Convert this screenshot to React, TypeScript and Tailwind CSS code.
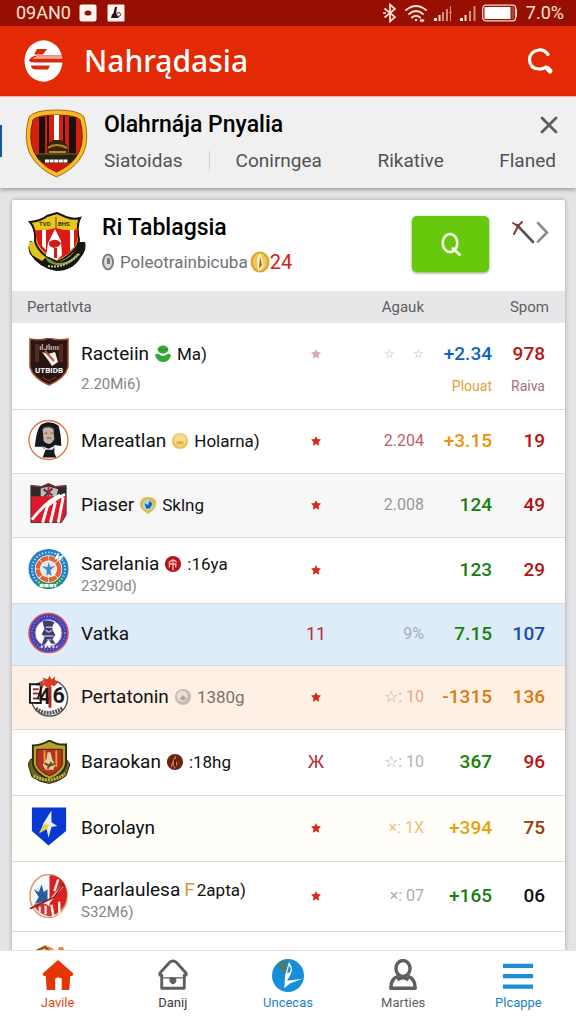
import type { ReactNode } from "react";

function StatusBar() {
  return (
    <div className="flex h-[26px] shrink-0 items-center bg-[#960f00] pl-4 pr-3 text-[#ffe3da]">
      <span className="text-lg leading-6">09AN0</span>
      <svg className="ml-2 size-[18px]" viewBox="0 0 18 18" aria-hidden="true">
        <rect width="17" height="17" x=".5" y=".5" rx="2" fill="#fff4f0" />
        <ellipse cx="9" cy="9" rx="3.4" ry="2.6" fill="#8a1208" />
      </svg>
      <svg className="ml-[10px] size-[18px]" viewBox="0 0 18 18" aria-hidden="true">
        <rect width="17" height="17" x=".5" y=".5" rx="1" fill="#fff4f0" />
        <path d="M8 3 L10 3 L9 10 L12 14 H4 Q4 11 6.500 9Z" fill="#2a0d1c" />
        <circle cx="11.500" cy="10.500" r="2" fill="none" stroke="#5a2030" />
      </svg>
      <div className="ml-auto flex items-center">
        <svg className="h-5 w-[14px]" viewBox="0 0 14 20" fill="none" stroke="currentColor" strokeWidth="1.700" aria-hidden="true">
          <path d="M1.500 5.500 L12 14 L7 18.500 V1.500 L12 6 L1.500 14.500 M0 10H3" />
        </svg>
        <svg className="ml-2 h-5 w-[22px]" viewBox="0 0 22 20" fill="none" stroke="currentColor" strokeWidth="1.900" strokeLinecap="round" aria-hidden="true">
          <path d="M1 7 Q11 -1 21 7 M4 11 Q11 5 18 11 M7 14.500 Q11 11 15 14.500" />
          <circle cx="11" cy="17" r="1.200" fill="currentColor" stroke="none" />
          <path d="M16 17.500h2" strokeWidth="2.500" />
        </svg>
        <svg className="ml-[7px] h-5 w-[18px]" viewBox="0 0 18 20" fill="currentColor" aria-hidden="true">
          <path d="M0 15h3v3H0zM4.500 12h2v6h-2z" />
          <path opacity=".6" d="M8 9h2v9H8zM12 6h2v12h-2zM16 3h1v15h-1zM15 9h3v1h-3z" />
        </svg>
        <svg className="ml-2 h-5 w-4" viewBox="0 0 16 20" fill="currentColor" aria-hidden="true">
          <path d="M0 15h3v3H0zM4.500 12h2v6h-2z" />
          <path opacity=".6" d="M9 8h2v10H9zM13.500 3h2v15h-2z" />
        </svg>
        <svg className="ml-[6px] h-[18px] w-9" viewBox="0 0 36 18" aria-hidden="true">
          <rect x=".7" y="1.200" width="33" height="15.600" rx="3" fill="none" stroke="#ffd8ce" strokeWidth="1.200" />
          <rect x="2.500" y="3" width="26" height="12" fill="#fff" />
          <rect x="29.500" y="3" width="3" height="12" fill="#a8483b" />
          <path d="M34.500 5v8" stroke="#ffd8ce" />
        </svg>
        <span className="ml-2 text-lg leading-6">7.0%</span>
      </div>
    </div>
  );
}

function AppHeader() {
  return (
    <header className="flex h-[70px] shrink-0 items-center bg-[#e32a05] pl-6 pr-[22px] text-white">
      <svg className="h-[42px] w-[39px]" viewBox="0 0 39 42" aria-hidden="true">
        <ellipse cx="19.500" cy="21" rx="19" ry="20.700" fill="#fff" />
        <path d="M13 9 H23 L19 14.500 H10Z" fill="#d62a0c" />
        <path d="M5 20 Q8 15.500 13 15.500 H39 V17 H14 Q10 17 8.500 18.500 H39 V22.500 H10 Q5 22.500 5 20Z" fill="#d62a0c" />
        <path d="M13 16H38V18H10Z" fill="#f4a08a" />
        <path d="M7 25.500 H26 L24 29.500 H11 Q7 29 7 25.500Z" fill="#d62a0c" />
      </svg>
      <h1 className="ml-[21px] font-['Noto_Sans',sans-serif] text-[30px] font-medium leading-10">Nahrądasia</h1>
      <button type="button" aria-label="Search" className="ml-auto">
        <svg className="h-8 w-7" viewBox="0 0 28 32" fill="none" stroke="#fff" strokeLinecap="round" aria-hidden="true">
          <path strokeWidth="3.200" d="M22 9.500 Q18.500 4.500 13 5 Q3.500 6.500 3.500 15 Q4 23.500 12.500 24 Q17 24.300 20 22" />
          <path strokeWidth="5" d="M21.500 23.500 L24 26" />
        </svg>
      </button>
    </header>
  );
}

function MainCrest() {
  return (
    <svg className="h-[69px] w-[63px] shrink-0" viewBox="0 0 63 69" aria-hidden="true">
      <path d="M4 8 Q9 1 31.500 1 Q54 1 59 8 Q65 30 58 45 Q50 60 31.500 68 Q13 60 5 45 Q-2 30 4 8Z" fill="#f7bd24" stroke="#a66a10" />
      <path d="M8 11 Q12 6 31.500 6 Q51 6 55 11 Q60 30 54 43 Q47 56 31.500 63 Q16 56 9 43 Q3 30 8 11Z" fill="#d5200f" stroke="#8a1a0a" />
      <path d="M14 8h6v37h-6zM22 7h2v38h-2zM38 7h2v38h-2zM44 8h7v37h-7z" fill="#1d100c" />
      <path d="M29 6h5v28h-5z" fill="#fff" />
      <path d="M22 42 Q22 34 28 31 H35 Q43 33 43 42 V46 H22Z" fill="#3a2509" />
      <path d="M23 39 Q31 33 42 39 M24 43H41" stroke="#b78827" strokeWidth="2" fill="none" />
      <path d="M10 45H53Q50 51 46 54H17Q12 50 10 45Z" fill="#28220f" />
      <path d="M11 45H52" stroke="#7b692e" />
      <path d="M17 54H46Q40 60 31.500 63 Q22 60 17 54Z" fill="#c9190f" />
      <path d="M20 52 h23" stroke="#fff" strokeWidth="3" strokeDasharray="4 .6" />
    </svg>
  );
}

function TopPanel() {
  return (
    <section className="relative z-10 flex h-[92px] shrink-0 border-t border-[#e9b4aa] bg-[#f0f0f1] pr-5 shadow-[0_2px_4px_rgba(0,0,0,0.3)]">
      <span className="mt-7 h-8 w-[2px] bg-[#0e56a8]" />
      <div className="ml-[23px] mt-3">
        <MainCrest />
      </div>
      <div className="ml-4 flex flex-1 flex-col pt-3">
        <div className="flex items-center justify-between">
          <h2 className="text-[23px] font-medium leading-8 text-black">Olahrnája Pnyalia</h2>
          <button type="button" aria-label="Close" className="-mr-1.5 p-1">
            <svg className="size-[18px]" viewBox="0 0 18 18" stroke="#5c5c5c" strokeWidth="2.800" strokeLinecap="round" aria-hidden="true">
              <path d="M2 2 L16 16 M16 2 L2 16" />
            </svg>
          </button>
        </div>
        <nav className="mt-2 flex items-center justify-between text-[19px] leading-6 text-[#505254]">
          <div className="flex items-center gap-[26px]">
            <a href="#siatoidas">Siatoidas</a>
            <span className="h-5 w-px bg-[#cfcfd1]" />
            <a href="#conirngea">Conirngea</a>
          </div>
          <a href="#rikative">Rikative</a>
          <a href="#flaned">Flaned</a>
        </nav>
      </div>
    </section>
  );
}

function CardHeader() {
  return (
    <div className="flex h-[91px] items-start pl-[15px] pr-4 pt-3">
      <svg className="h-[60px] w-[60px] shrink-0" viewBox="0 0 60 60" aria-hidden="true">
        <path d="M3 29 Q0 36 3 42 Q12 56 29 59 Q46 59 54 45 Q60 38 58 30 L52 30 Q48 45 30 51 Q12 46 9 31Z" fill="#15170e" />
        <path d="M2 30 Q1 36 5 43 L15 49 L21 43 Q11 40 9 30Z" fill="#e1c51f" />
        <path d="M20 43 Q18 50 30 52 Q42 53 51 42" stroke="#889b23" strokeWidth="2" fill="none" />
        <path d="M3 10 Q14 9 20 4 L30 1 L39 5 Q47 8 53 6 Q49 14 52 28 Q50 41 30 50 Q11 42 8 29 Q9 17 3 10Z" fill="#e9c71e" stroke="#17150c" strokeWidth="2" />
        <path d="M8 18 Q19 19 29 16 Q41 20 51 17 L50 29 Q47 41 30 48 Q13 40 10 29Z" fill="#e01615" />
        <path d="M15 18h4v20l-4-4zM43 18h4v17l-4 4zM28 17 L21 31 L19 44 L30 48 L35 43 L34 29Z" fill="#fff" />
        <path d="M22 30 Q29 25 34 31 Q33 35 27 36 Q21 35 22 30ZM27 36h3v10h-3z" fill="#cf1d19" />
        <path d="M29 5v11" stroke="#5b4b0d" />
        <text x="12" y="13.500" fontSize="6" fontWeight="700" fill="#493b0c">TVD</text>
        <text x="31" y="13.500" fontSize="6" fontWeight="700" fill="#2d250a">BHS</text>
        <path d="M21 54 Q39 57 53 41" stroke="#c9c4a7" strokeWidth="2" strokeDasharray="2 1" fill="none" />
      </svg>
      <div className="ml-[15px] flex-1">
        <h3 className="text-[23px] font-medium leading-8 text-black">Ri Tablagsia</h3>
        <div className="mt-1 flex items-center leading-7 text-[#707174]">
          <svg className="h-[18px] w-3" viewBox="0 0 12 18" aria-hidden="true">
            <ellipse cx="6" cy="9" rx="5" ry="7.500" fill="#d9dadb" stroke="#7c7f82" strokeWidth="2" />
            <path d="M5 5h3v6H5z" fill="#777a7d" />
          </svg>
          <span className="ml-[6px] text-[17px]">Poleotrainbicuba</span>
          <svg className="ml-[2px] h-[22px] w-5" viewBox="0 0 20 22" aria-hidden="true">
            <ellipse cx="10" cy="11" rx="9.500" ry="10.500" fill="#dfa62a" />
            <ellipse cx="10" cy="11" rx="7" ry="8.500" fill="#efc95e" />
            <path d="M10 2 Q15 12 12 18 L8 20 L7 8Z" fill="#fff3ca" />
            <path d="M10 5 L12 14 L9 18Z" fill="#a56a10" />
          </svg>
          <span className="text-xl text-[#cf2119]">24</span>
        </div>
      </div>
      <button type="button" aria-label="Search teams" className="mt-1 flex h-14 w-[77px] items-center justify-center rounded-[5px] bg-[#66c90c] shadow-[0_1px_3px_rgba(30,90,0,0.6)]">
        <svg className="h-[26px] w-6" viewBox="0 0 24 26" fill="none" stroke="#f8ffee" strokeLinecap="round" aria-hidden="true">
          <ellipse cx="11" cy="12" rx="7.300" ry="9" strokeWidth="2.600" />
          <path strokeWidth="2.800" d="M14 17.500 L20.500 23.500" />
        </svg>
      </button>
      <button type="button" aria-label="Next" className="ml-[22px] mt-2">
        <svg className="h-[26px] w-[38px]" viewBox="0 0 38 26" fill="none" strokeWidth="2.600" strokeLinecap="round" aria-hidden="true">
          <path stroke="#555759" d="M6 5 L22 22" />
          <path stroke="#8d8e91" d="M27 3 L36 12.500 L27 21.500" />
          <path stroke="#8b3832" strokeWidth="2" d="M2 3 L7 6 L11 2 M7 6 L3 14" />
        </svg>
      </button>
    </div>
  );
}

const crests: Record<string, ReactNode> = {
  racteiin: (
    <>
      <path d="M2 1 Q12 3 21 0 Q30 3 40 1 V29 Q37 40 21 47 Q5 40 2 29Z" fill="#281613" stroke="#a04c31" strokeWidth="1.500" />
      <path d="M9 6v18M33 6v18" stroke="#522a20" strokeWidth="4" />
      <text x="21" y="12" textAnchor="middle" fontSize="8" fontWeight="700" fill="#cdb9b0">ılJlıııı</text>
      <path d="M14 14 L20 16 L27 14 L30 24 L24 28 L20 22Z" fill="#fff3ee" />
      <path d="M17 13l9 10" stroke="#bd503a" strokeWidth="2" />
      <text x="21" y="35" textAnchor="middle" fontSize="8" fontWeight="700" fill="#fff">UTBIDB</text>
      <path d="M14 39 L21 43 L28 39" stroke="#8d3c2a" fill="none" />
    </>
  ),
  mareatlan: (
    <>
      <circle cx="21" cy="21" r="20" fill="#fff" stroke="#da7544" strokeWidth="1.400" />
      <path d="M7 28 Q9 5 16 4 Q23 1 31 6 Q34 15 34 27 L27 26 V34 L29 39 H15 L18 31 L14 28Z" fill="#15171c" />
      <path d="M15 10 Q21 5 26 10 L27 20 Q22 29 16 22Z" fill="#c8b2a4" />
      <path d="M17 14h3M23 14h3M19 19h5M15 9q6-3 12 1" stroke="#69574e" fill="none" />
      <path d="M14 27 L21 30 L29 26 L25 31 L18 31Z" fill="#eceae8" />
    </>
  ),
  piaser: (
    <>
      <path d="M3 2 L14 3 L21 0 L28 3 L39 2 V32 Q37 36 34 40 H3Z" fill="#df1929" stroke="#403838" />
      <path d="M3 3 L14 4 L21 1 L28 4 L39 3 V13H3Z" fill="#2f292a" />
      <path d="M13 5 L21 3 L31 6 L29 13H13Z" fill="#c3bbb9" />
      <path d="M16 6l9 6M25 5l-8 8" stroke="#3f3536" strokeWidth="2" />
      <path d="M21 3v10" stroke="#ce1728" strokeWidth="2" />
      <path d="M33 12 Q20 17 4 37 M38 11 Q30 14 19 24 M20 23 L15 40 M28 19 L23 40 M36 14 L31 40" stroke="#fff" strokeWidth="3" fill="none" />
    </>
  ),
  sarelania: (
    <>
      <circle cx="21" cy="21" r="20.500" fill="#247fcb" />
      <path d="M37 30 Q32 41 19 41 Q11 40 8 37 L13 30 Q21 36 31 29Z" fill="#269451" />
      <circle cx="21" cy="21" r="17" fill="none" stroke="#b3d9ee" strokeWidth="2" strokeDasharray="1.500 1.800" />
      <circle cx="21" cy="21" r="14" fill="#fff" />
      <circle cx="21" cy="21" r="11" fill="none" stroke="#e8602d" strokeWidth="4.500" strokeDasharray="8 .7" />
      <circle cx="21" cy="21" r="8" fill="#e5eaf3" />
      <path d="M14 18 L20 19 L21 14 L23 19 L28 18 L23 22 L24 28 L21 26 L19 28 L19 22Z" fill="#4c86bc" />
      <path d="M31 5l-2 5 6-2-3 4" stroke="#fff" strokeWidth="2" fill="none" />
      <path d="M12 38h17" stroke="#fff" strokeWidth="3.500" strokeDasharray="4 1" />
    </>
  ),
  vatka: (
    <>
      <circle cx="21" cy="21" r="20" fill="#3e40b1" stroke="#dc5161" strokeWidth="1.600" />
      <circle cx="21" cy="21" r="17" fill="none" stroke="#8c93df" strokeWidth="1.500" strokeDasharray="1 2" />
      <circle cx="21" cy="21" r="13.800" fill="#fff" stroke="#a9669b" />
      <path d="M15 9 Q21 7 27 10 L25 14 V18 L28 23 L25 27 L28 32 H24 L21 28 L17 33 H14 L17 25 L14 22 L17 17 L16 14Z" fill="#333e7a" />
      <path d="M18 15h7M18 18q4 4 6 0M16 24h10M19 28h5" stroke="#d1acbb" strokeWidth="1.500" fill="none" />
      <path d="M13 35h17" stroke="#fff" strokeWidth="2" strokeDasharray="2 2" />
    </>
  ),
  pertatonin: (
    <>
      <circle cx="22" cy="23" r="18.500" fill="#fff" stroke="#555" strokeWidth="1.500" />
      <path d="M2 9 H13 V28 H2Z" fill="#fff" stroke="#191617" strokeWidth="2" />
      <path d="M5 14h6M5 18.500h6M5 23.500h6" stroke="#9d3332" strokeWidth="2" />
      <path d="M8 9H15L10 24M7 28H14" stroke="#191617" strokeWidth="2" fill="none" />
      <text x="11" y="29" fontSize="22" fontWeight="700" fill="#1c191b">4</text>
      <text x="25" y="28" fontSize="22" fontWeight="700" fill="#1c191b">6</text>
      <path d="M21 11h3v22h-3z" fill="#c02521" />
      <path d="M12 7 L17 7 L15 2 L20 4 L22 0 L24 4 L28 1 L27 6 L31 7 L27 11 L24 10 L20 13 L17 10 L13 12Z" fill="#dd3822" />
      <path d="M8 34 Q21 43 36 33" stroke="#544c4c" strokeWidth="4" strokeDasharray="2 1" fill="none" />
    </>
  ),
  baraokan: (
    <>
      <path d="M3 19 L0 24 L4 37 Q12 43 22 44 Q32 42 39 36 L43 24 L39 19Z" fill="#716419" stroke="#29260d" />
      <path d="M5 5 Q14 5 22 0 Q30 5 39 4 V24 Q37 35 22 40 Q7 34 5 24Z" fill="#b6a129" stroke="#2b2b12" strokeWidth="2" />
      <path d="M9 9 H35 V25 Q31 33 22 36 Q12 32 9 25Z" fill="#b7301d" stroke="#4b1b0c" />
      <path d="M16 10h2v13h-2zM28 10h2v17h-2z" fill="#df9d43" />
      <path d="M19 19 L20 12 H23 L25 20 L28 24 L26 30 H18 L15 25Z" fill="#e2cda2" />
      <path d="M17 23q5 5 11 0M20 29l4-7" stroke="#6a4a1c" strokeWidth="2" fill="none" />
      <path d="M6 36 Q21 45 38 34" stroke="#c2b64c" strokeWidth="3" strokeDasharray="2 1" fill="none" />
    </>
  ),
  borolayn: (
    <>
      <path d="M4 1 H39 V25 L21 40 L4 25Z" fill="#0a36d2" />
      <path d="M24 4 L16 17 L12 27 L19 23 L21 32 L24 21 L30 20 L24 16Z" fill="#e6eef8" />
      <path d="M11 27 L17 18 L22 19 L19 23Z" fill="#e6d42b" />
    </>
  ),
  paarlaulesa: (
    <>
      <ellipse cx="21" cy="22" rx="19" ry="22" fill="#f3f8fb" stroke="#e29a62" strokeWidth="1.500" />
      <path d="M22 1 H26 Q40 5 40 22 Q38 39 22 43Z" fill="#db2020" />
      <path d="M6 15 L11 18 L14 10 L16 18 L20 15 V27 L7 30 L11 23Z" fill="#245e9f" />
      <path d="M6 31 Q14 28 20 31 L25 35 L22 43 Q9 40 6 31Z" fill="#d33437" />
      <path d="M31 5 L27 17 M35 12 L20 30 M26 43 L24 31 M32 41V28" stroke="#fff1ea" strokeWidth="2.500" fill="none" />
      <path d="M2 35 L27 23 L36 10" stroke="#8f221c" strokeWidth="1.700" fill="none" />
      <path d="M12 33v6M18 32v9" stroke="#fff" strokeWidth="2" />
    </>
  ),
};

const badges: Record<string, ReactNode> = {
  green: (
    <>
      <ellipse cx="10" cy="5" rx="6" ry="4.500" fill="#35a738" />
      <path d="M1 11 Q4 8 8 12 H12 Q16 8 19 11 Q17 19 10 19 Q3 18 1 11Z" fill="#35a738" />
      <path d="M5 5h10" stroke="#2b8b35" />
    </>
  ),
  gold: (
    <>
      <circle cx="10" cy="10" r="9" fill="#edbf55" />
      <circle cx="10" cy="9" r="7" fill="#f6da8a" />
      <path d="M6 10h8v4H6z" fill="#e9bf62" />
      <path d="M7 12h6" stroke="#a67a24" strokeDasharray="1 1" />
    </>
  ),
  blue: (
    <>
      <path d="M10 1 Q20 1 19 10 Q18 15 10 20 Q2 15 1 10 Q1 1 10 1Z" fill="#e8b646" />
      <circle cx="10" cy="10" r="6" fill="#a7dbe3" />
      <path d="M6 8 L10 10 L12 5 L15 9 L12 14 L8 14Z" fill="#1b67af" />
    </>
  ),
  red: (
    <>
      <circle cx="10" cy="10" r="9" fill="#b5151c" />
      <path d="M6 14 V8 Q10 3 14 8 M10 5v12M6 10h8M13 10v4" stroke="#f4bbb5" strokeWidth="1.500" fill="none" />
    </>
  ),
  gray: (
    <>
      <circle cx="10" cy="10" r="9" fill="#c6bbb5" />
      <circle cx="9" cy="9" r="6" fill="#e8e0da" />
      <path d="M6 12 L10 8 L14 12 L10 14Z" fill="#c59d7f" />
    </>
  ),
  brown: (
    <>
      <circle cx="10" cy="10" r="9" fill="#6a2413" />
      <path d="M11 2 Q10 8 13 12 L9 18 L8 13 L5 17 Q7 8 11 2Z" fill="#df7b35" />
      <path d="M10 7v8" stroke="#35140f" strokeWidth="2" />
    </>
  ),
};

function Star({ className = "text-[#d92a15]" }: { className?: string }) {
  return (
    <svg className={`mx-auto size-[10px] ${className}`} viewBox="0 0 10 10" fill="currentColor" role="img" aria-label="star">
      <path d="M5 0 L6.400 3.100 L10 3.500 L7.500 6 L8.200 9.700 L5 7.900 L1.800 9.700 L2.500 6 L0 3.500 L3.600 3.100Z" />
    </svg>
  );
}

type Row = {
  crest: string;
  name: string;
  badge?: string;
  letter?: string;
  extra?: string;
  extraClass?: string;
  sub?: string;
  mark?: string;
  faint?: boolean;
  mid?: string;
  midClass?: string;
  score: string;
  scoreClass: string;
  scoreNote?: string;
  last: string;
  lastClass: string;
  lastNote?: string;
  rowClass: string;
};

const rows: Row[] = [
  { crest: "racteiin", name: "Racteiin", badge: "green", extra: "Ma)", sub: "2.20Mi6)", faint: true, mid: "☆      ☆", midClass: "text-[#aaaaaf]", score: "+2.34", scoreClass: "text-[#0c62bd]", scoreNote: "Plouat", last: "978", lastClass: "text-[#b91212]", lastNote: "Raiva", rowClass: "h-[86px]" },
  { crest: "mareatlan", name: "Mareatlan", badge: "gold", extra: "Holarna)", mid: "2.204", midClass: "text-[#b8616b]", score: "+3.15", scoreClass: "text-[#e9920a]", last: "19", lastClass: "text-[#b91212]", rowClass: "h-16" },
  { crest: "piaser", name: "Piaser", badge: "blue", extra: "Sklng", mid: "2.008", midClass: "text-[#97979b]", score: "124", scoreClass: "text-[#15810d]", last: "49", lastClass: "text-[#b01515]", rowClass: "h-16 bg-[#f7f7f8]" },
  { crest: "sarelania", name: "Sarelania", badge: "red", extra: ":16ya", sub: "23290d)", score: "123", scoreClass: "text-[#15810d]", last: "29", lastClass: "text-[#b01515]", rowClass: "h-[66px]" },
  { crest: "vatka", name: "Vatka", mark: "11", mid: "9%", midClass: "text-[#a2afba]", score: "7.15", scoreClass: "text-[#15810d]", last: "107", lastClass: "text-[#1649b2]", rowClass: "h-[62px] bg-[#deebf8]" },
  { crest: "pertatonin", name: "Pertatonin", badge: "gray", extra: "1380g", extraClass: "text-[#7c706a]", mid: "☆: 10", midClass: "text-[#e2a681]", score: "-1315", scoreClass: "text-[#df770b]", last: "136", lastClass: "text-[#df770b]", rowClass: "h-16 bg-[#fff0e5]" },
  { crest: "baraokan", name: "Baraokan", badge: "brown", extra: ":18hg", mark: "Ж", mid: "☆: 10", midClass: "text-[#b2b2b5]", score: "367", scoreClass: "text-[#15810d]", last: "96", lastClass: "text-[#b91212]", rowClass: "h-[66px]" },
  { crest: "borolayn", name: "Borolayn", mid: "×: 1X", midClass: "text-[#e8c17c]", score: "+394", scoreClass: "text-[#e5a20d]", last: "75", lastClass: "text-[#9b390f]", rowClass: "h-[66px] bg-[#fffef8]" },
  { crest: "paarlaulesa", name: "Paarlaulesa", letter: "F", extra: "2apta)", sub: "S32M6)", mid: "×: 07", midClass: "text-[#aaaaae]", score: "+165", scoreClass: "text-[#15810d]", last: "06", lastClass: "text-[#111111]", rowClass: "h-[70px]" },
];

function TeamRow({ row }: { row: Row }) {
  const tall = row.scoreNote !== undefined;
  const top = tall ? "pt-[19px] align-top" : "";
  return (
    <tr className={`border-b border-[#dadadc] ${row.rowClass}`}>
      <td className="p-0 pl-4">
        <div className="flex items-center">
          <svg className={`w-[42px] shrink-0 ${tall ? "h-12 self-start" : "h-11"}`} viewBox={tall ? "0 0 42 48" : "0 0 43 44"} aria-hidden="true">
            {crests[row.crest]}
          </svg>
          <div className={`ml-[11px] whitespace-nowrap ${row.sub ? (tall ? "pt-1" : "pt-2") : ""}`}>
            <div className="flex items-center text-[19px] leading-6 text-[#111111]">
              <span>{row.name}</span>
              {row.badge && (
                <svg className="mx-[5px] size-[18px]" viewBox="0 0 20 20" aria-hidden="true">
                  {badges[row.badge]}
                </svg>
              )}
              {row.letter && <span className="ml-1 mr-[2px] text-[#dc963c]">{row.letter}</span>}
              {row.extra && <span className={`text-[17px] ${row.extraClass ?? ""}`}>{row.extra}</span>}
            </div>
            {row.sub && <div className={`text-[15px] leading-5 text-[#858588] ${tall ? "mt-2" : ""}`}>{row.sub}</div>}
          </div>
        </div>
      </td>
      <td className={`p-0 pl-1 text-center ${tall ? "pt-[26px] align-top" : ""}`}>
        {row.mark ? <span className="text-lg leading-6 text-[#b92d35]">{row.mark}</span> : <Star className={row.faint ? "text-[#d8aab0]" : undefined} />}
      </td>
      <td className={`whitespace-pre p-0 text-right leading-6 ${tall ? "text-xs/6" : "text-base/6"} ${row.midClass ?? ""} ${top}`}>{row.mid}</td>
      <td className={`p-0 text-right text-[19px] font-medium leading-6 ${row.scoreClass} ${top}`}>
        {row.score}
        {row.scoreNote && <div className="mt-[10px] text-sm font-normal leading-5 text-[#e4a034]">{row.scoreNote}</div>}
      </td>
      <td className={`p-0 pr-5 text-right text-[19px] font-medium leading-6 ${row.lastClass} ${top}`}>
        {row.last}
        {row.lastNote && <div className="mt-[10px] text-sm font-normal leading-5 text-[#a4707d]">{row.lastNote}</div>}
      </td>
    </tr>
  );
}

function Standings() {
  return (
    <table className="w-full table-fixed border-collapse">
      <colgroup>
        <col />
        <col className="w-[52px]" />
        <col className="w-[84px]" />
        <col className="w-[68px]" />
        <col className="w-[73px]" />
      </colgroup>
      <thead>
        <tr className="h-8 bg-[#e7e7e9] text-[15px] leading-6 text-[#5c5e61]">
          <th className="p-0 pl-[15px] text-left font-normal">Pertatlvta</th>
          <th className="p-0" />
          <th className="p-0 text-right font-normal">Agauk</th>
          <th className="p-0" />
          <th className="p-0 pr-4 text-right font-normal">Spom</th>
        </tr>
      </thead>
      <tbody>
        {rows.map((row) => (
          <TeamRow key={row.crest} row={row} />
        ))}
        <tr className="h-16">
          <td className="p-0 pl-4 align-top">
            <svg className="mt-3 h-11 w-[42px]" viewBox="0 0 42 44" aria-hidden="true">
              <path d="M2 9 L17 1 L24 4 L29 9 L31 3 L35 3 L38 10 L30 30 L8 30Z" fill="#e68d39" />
              <path d="M5 8 L17 3 L24 9" stroke="#744629" strokeWidth="1.500" fill="none" />
              <path d="M9 9 L16 5 L21 9Z" fill="#f5c79c" />
            </svg>
          </td>
          <td colSpan={4} />
        </tr>
      </tbody>
    </table>
  );
}

const navItems = [
  {
    label: "Javile",
    className: "text-[#e24a12]",
    icon: <path fill="#e63405" d="M17 1 L33 15 Q34 18 30 18 L29 33 H21 V21 Q17 18 14 21 V33 H5 L4 18 Q0 18 1 15Z" />,
  },
  {
    label: "Danij",
    className: "text-[#38393b]",
    icon: (
      <g fill="none" stroke="#5d5e60" strokeWidth="3" strokeLinejoin="round" strokeLinecap="round">
        <path d="M3 15 L13 4 Q17 0 21 4 L31 15 V17 H29 V31 H5 V17 H3Z" />
        <path d="M7 20H27" strokeWidth="1.500" />
        <path d="M14 20 H20 V24 Q17 29 14 24Z" fill="#5d5e60" strokeWidth="1" />
      </g>
    ),
  },
  {
    label: "Uncecas",
    className: "text-[#1784c8]",
    icon: (
      <>
        <ellipse cx="17" cy="17.500" rx="17" ry="17.500" fill="#168fda" />
        <path d="M5 6 Q12 0 17 2 L13 17Z" fill="#477f75" />
        <path d="M18 3 Q23 9 20 16 L16 23 L32 21 L19 26 L13 31 L14 17Z" fill="#fff" />
        <path d="M18 7 L16 15 L19 14 Q21 9 18 7Z" fill="#168fda" />
      </>
    ),
  },
  {
    label: "Marties",
    className: "text-[#5f6062]",
    icon: (
      <g fill="none" stroke="#5d5e60" strokeWidth="3.600" strokeLinejoin="round">
        <ellipse cx="17" cy="10" rx="7.500" ry="8.500" />
        <path d="M12 18 Q4 21 4 31 H30 Q30 21 22 18 M11 22 Q17 18 23 22" />
      </g>
    ),
  },
  {
    label: "Plcappe",
    className: "text-[#1784c8]",
    icon: <path d="M1 5H33V9.500H1zM1 16H33V20.500H1zM1 27H33V31.500H1z" fill="#198fd6" />,
  },
];

function BottomNav() {
  return (
    <nav className="relative z-10 grid h-[74px] shrink-0 grid-cols-5 border-t border-[#e3e3e4] bg-white">
      {navItems.map((item) => (
        <a key={item.label} href={`#${item.label.toLowerCase()}`} className={`flex flex-col items-center pt-2 text-[13px] leading-5 ${item.className}`}>
          <svg className="h-[34px] w-8" viewBox="0 0 34 36" aria-hidden="true">
            {item.icon}
          </svg>
          {item.label}
        </a>
      ))}
    </nav>
  );
}

export default function App() {
  return (
    <div className="flex h-dvh flex-col overflow-hidden bg-[#e4e4e6] font-[Roboto,sans-serif]">
      <StatusBar />
      <AppHeader />
      <TopPanel />
      <main className="min-h-0 flex-1 overflow-y-auto pl-3 pr-[11px] pt-3 [scrollbar-width:none]">
        <div className="rounded-t-[2px] bg-white shadow-[0_0_4px_rgba(0,0,0,0.3)]">
          <CardHeader />
          <Standings />
        </div>
      </main>
      <BottomNav />
    </div>
  );
}
